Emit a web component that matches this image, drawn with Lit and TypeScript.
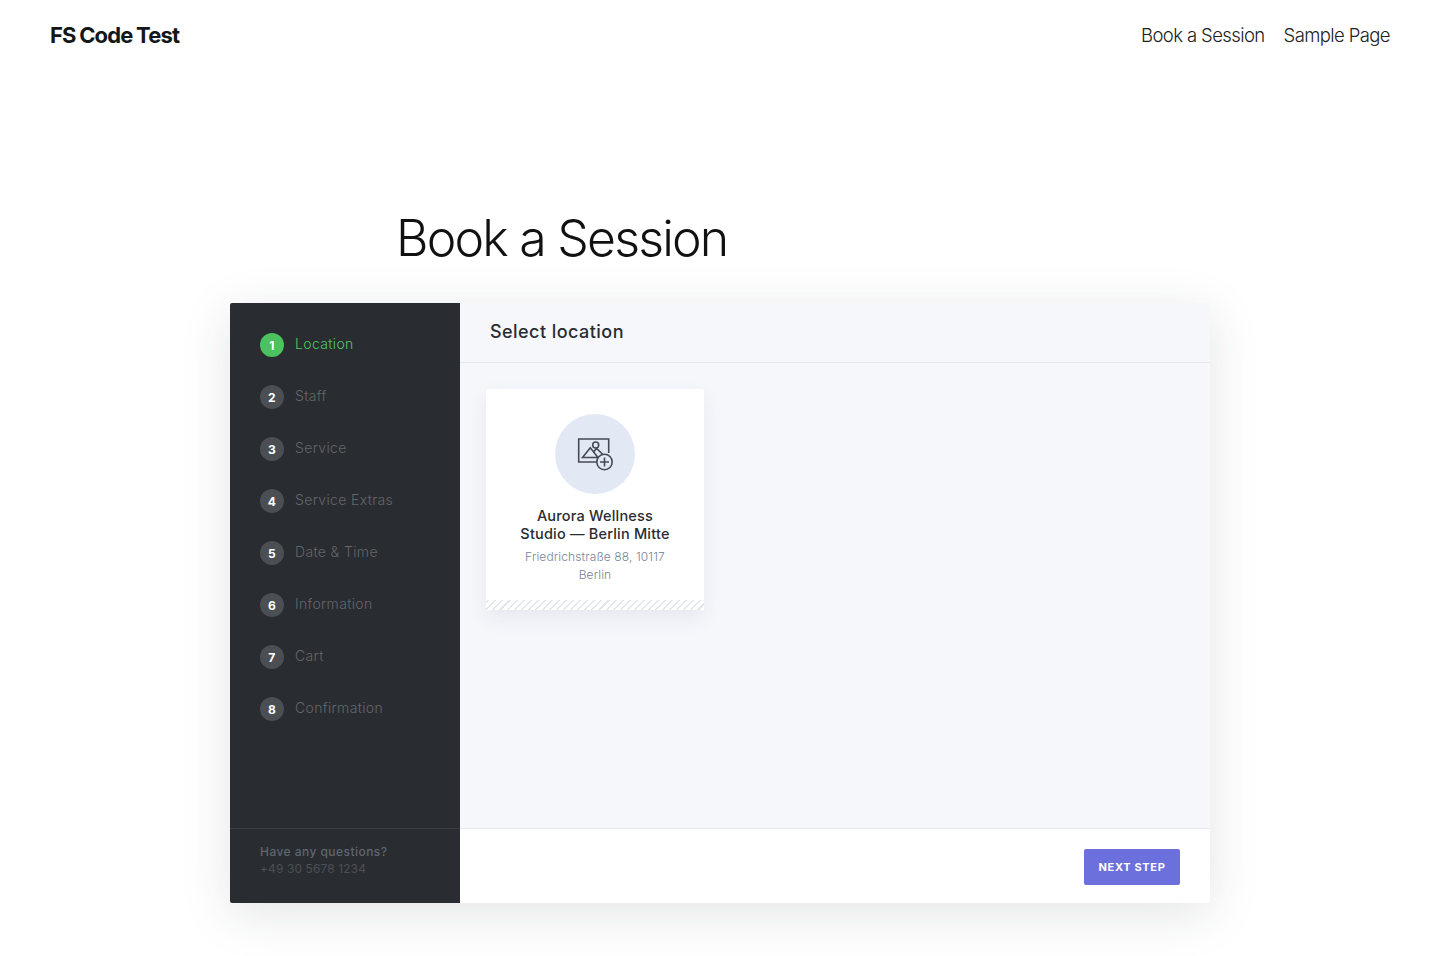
import { LitElement, html, css, svg } from "lit";
import { customElement } from "lit/decorators.js";

const STEPS = ["Location", "Staff", "Service", "Service Extras", "Date & Time", "Information", "Cart", "Confirmation"];

@customElement("app-root")
export class AppRoot extends LitElement {
  static styles = css`
    :host { display: block; min-height: 956px; background: #fff; font-family: "Inter", "Liberation Sans", sans-serif; color: #111; overflow: hidden; }
    .top { height: 70px; padding: 0 50px; display: flex; justify-content: space-between; align-items: center; }
    .brand { font-size: 22px; font-weight: 700; letter-spacing: -0.8px; word-spacing: -1px; color: #14171a; }
    .nav { display: flex; gap: 19px; font-size: 18.5px; font-weight: 300; letter-spacing: -0.6px; color: #222; }
    h1 { width: 644px; margin: 130px auto 0; height: 76px; line-height: 76px; font-size: 50px; font-weight: 300; letter-spacing: -1.8px; text-indent: -2px; color: #111; white-space: nowrap; }
    .panel { width: 980px; height: 600px; margin: 27px auto 0; display: flex; border-radius: 2px; box-shadow: 0 10px 50px rgba(40, 50, 50, .13); overflow: hidden; }
    .side { width: 230px; flex: none; background: #292c31; display: flex; flex-direction: column; }
    .steps { flex: 1; padding: 30px 30px 0; display: flex; flex-direction: column; gap: 28px; }
    .step { display: flex; align-items: center; height: 24px; font-size: 14px; letter-spacing: .35px; color: #63666c; font-weight: 300; }
    .num { width: 24px; height: 24px; border-radius: 50%; background: #4b4f54; color: #fff; display: grid; place-items: center; font: 700 12px "Inter", sans-serif; margin-right: 11px; flex: none; }
    .step.on { color: #4fc864; }
    .step.on .num { background: #4bc25f; }
    .lab { position: relative; top: -2px; }
    .help { height: 75px; border-top: 1px solid #3a3d42; padding: 14px 30px 0; box-sizing: border-box; font-size: 12px; line-height: 17px; flex: none; }
    .help b { display: block; font-weight: 500; color: #5f6670; letter-spacing: .45px; }
    .help span { display: block; color: #4c4f55; letter-spacing: .1px; font-weight: 400; }
    .main { flex: 1; display: flex; flex-direction: column; background: #f5f7fb; }
    .head { border-bottom: 1px solid #e5e9ee; padding: 0 30px 2px; display: flex; align-items: center; font-size: 18px; font-weight: 500; color: #292c31; letter-spacing: .45px; height: 57px; flex: none; }
    .body { flex: 1; padding: 26px; }
    .card { width: 218px; height: 221px; background: #fff; border-radius: 2px; box-shadow: 0 8px 20px rgba(60, 70, 90, .08); display: flex; flex-direction: column; align-items: center; padding-top: 25px; box-sizing: border-box; text-align: center; }
    .circle { width: 80px; height: 80px; border-radius: 50%; background: #e3e9f4; display: grid; place-items: center; }
    .circle svg { display: block; }
    .name { margin-top: 13px; width: 160px; font-size: 14.5px; line-height: 18px; font-weight: 500; color: #292c31; letter-spacing: .2px; }
    .addr { margin-top: 5px; width: 160px; font-size: 12px; line-height: 18px; font-weight: 300; color: #76839a; letter-spacing: .12px; flex: 1; }
    .stripe { align-self: stretch; height: 10px; background: repeating-linear-gradient(-45deg, #fff 0 3.5px, #e4e7ea 3.5px 5px); }
    .foot { height: 75px; flex: none; background: #fff; border-top: 1px solid #e5e9f2; box-sizing: border-box; display: flex; align-items: flex-start; justify-content: flex-end; padding: 20px 30px 0; }
    .next { width: 96px; height: 36px; border: 0; border-radius: 2px; background: #6c70dc; color: #fff; font: 700 11px "Inter", sans-serif; letter-spacing: .65px; padding: 0; }
  `;

  render() {
    return html`
      <div class="top">
        <div class="brand">FS Code Test</div>
        <div class="nav"><span>Book a Session</span><span>Sample Page</span></div>
      </div>
      <h1>Book a Session</h1>
      <div class="panel">
        <div class="side">
          <div class="steps">
            ${STEPS.map((s, i) => html`<div class="step ${i === 0 ? "on" : ""}"><span class="num">${i + 1}</span><span class="lab">${s}</span></div>`)}
          </div>
          <div class="help"><b>Have any questions?</b><span>+49 30 5678 1234</span></div>
        </div>
        <div class="main">
          <div class="head">Select location</div>
          <div class="body">
            <div class="card">
              <div class="circle">
                <svg width="36" height="34" viewBox="0 0 36 34" fill="none" stroke="#454a54" stroke-width="1.6">
                  ${svg`<path d="M20 25H1.7V2H31.7V16"/>
                  <circle cx="18.7" cy="8" r="3"/>
                  <path d="M5.5 20.5L13.3 10.7L21 20.5ZM16.5 15L19.5 11.5L25.5 17"/>
                  <circle cx="27.5" cy="25" r="7.7" fill="#e3e9f4"/>
                  <path d="M27.5 20.5V29.5M23 25H32"/>`}
                </svg>
              </div>
              <div class="name">Aurora Wellness Studio — Berlin Mitte</div>
              <div class="addr">Friedrichstraße 88, 10117 Berlin</div>
              <div class="stripe"></div>
            </div>
          </div>
          <div class="foot"><button class="next">NEXT STEP</button></div>
        </div>
      </div>
    `;
  }
}
